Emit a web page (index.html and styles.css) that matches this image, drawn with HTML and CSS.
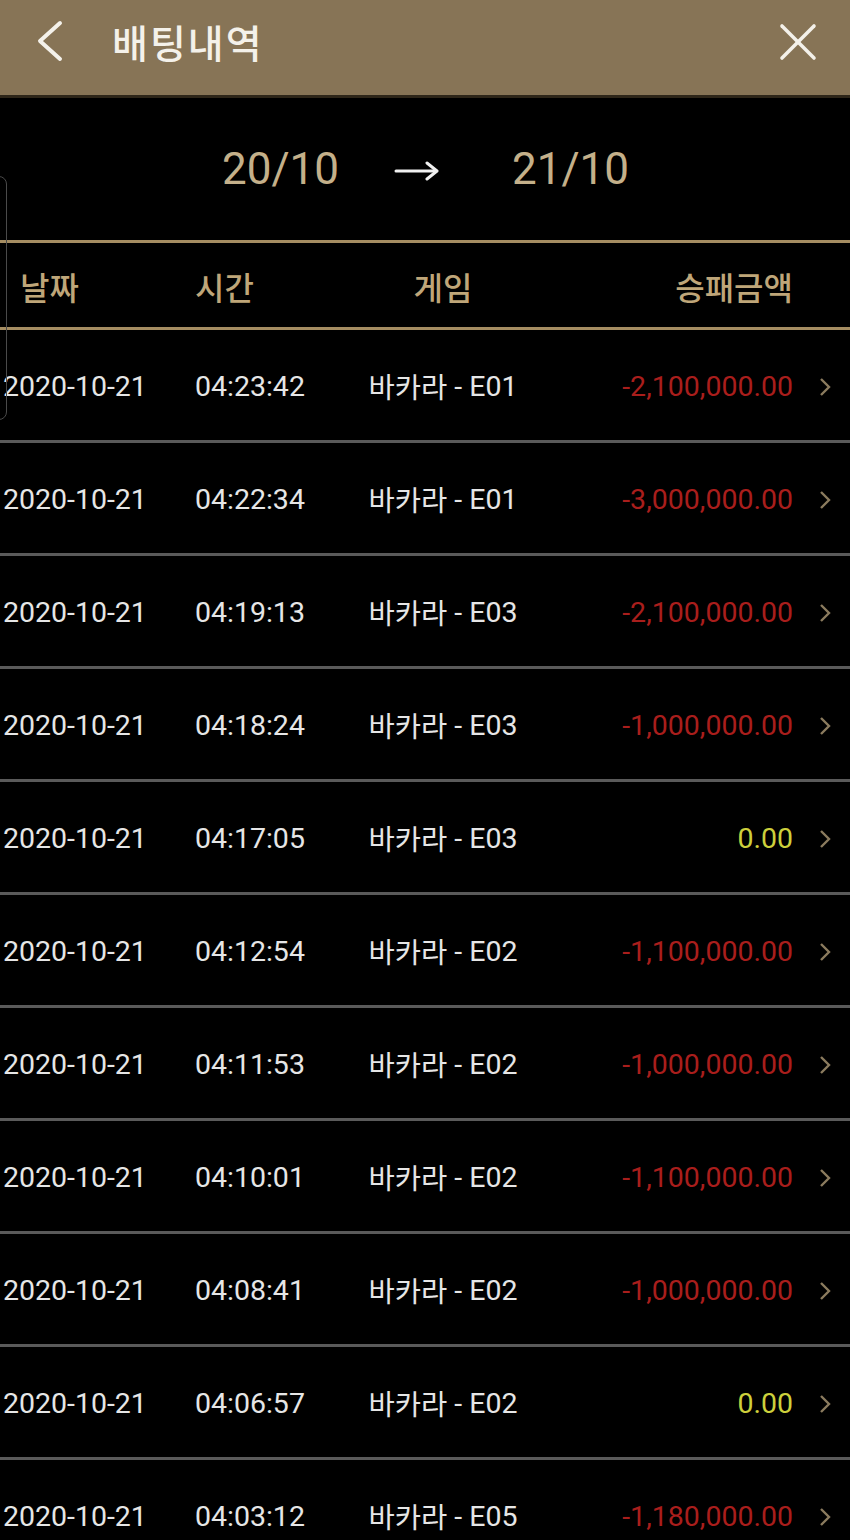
FILE: index.html
```html
<!DOCTYPE html>
<html lang="ko">
  <head>
    <meta charset="UTF-8" />
    <title>배팅내역</title>
    <link rel="stylesheet" href="styles.css">
  </head>

  <body>
    <header class="topbar">
      <button class="icon-btn back" aria-label="뒤로">
        <svg width="30" height="44" viewBox="0 0 30 44">
          <polyline points="24,3 4,21 24,39" fill="none" stroke="#f4f1ea" stroke-width="4" stroke-linecap="round" stroke-linejoin="round" />
        </svg>
      </button>
      <h1>배팅내역</h1>
      <button class="icon-btn close" aria-label="닫기">
        <svg width="40" height="40" viewBox="0 0 40 40">
          <line x1="4" y1="4" x2="36" y2="36" stroke="#f4f1ea" stroke-width="3.6" stroke-linecap="round" />
          <line x1="36" y1="4" x2="4" y2="36" stroke="#f4f1ea" stroke-width="3.6" stroke-linecap="round" />
        </svg>
      </button>
    </header>

    <section class="range">
      <span class="range-date">20/10</span>
      <svg class="range-arrow" width="46" height="20" viewBox="0 0 46 20">
        <line x1="2" y1="10" x2="42" y2="10" stroke="#f0f0f0" stroke-width="3" stroke-linecap="round" />
        <polyline points="33,2 43,10 33,18" fill="none" stroke="#f0f0f0" stroke-width="3" stroke-linecap="round" stroke-linejoin="round" />
      </svg>
      <span class="range-date">21/10</span>
    </section>

    <div class="side-tab"></div>

    <div class="table">
      <div class="row head">
        <span class="c-date">날짜</span>
        <span class="c-time">시간</span>
        <span class="c-game">게임</span>
        <span class="c-amount">승패금액</span>
        <span></span>
      </div>

      <div class="row">
        <span class="c-date">2020-10-21</span>
        <span class="c-time">04:23:42</span>
        <span class="c-game"><span class="kr">바카라</span> - E01</span>
        <span class="c-amount loss">-2,100,000.00</span>
        <span class="c-more"><svg width="12" height="20" viewBox="0 0 12 20"><polyline points="2,2 10,10 2,18" fill="none" stroke="#8b7b5e" stroke-width="2.4" /></svg></span>
      </div>
      <div class="row">
        <span class="c-date">2020-10-21</span>
        <span class="c-time">04:22:34</span>
        <span class="c-game"><span class="kr">바카라</span> - E01</span>
        <span class="c-amount loss">-3,000,000.00</span>
        <span class="c-more"><svg width="12" height="20" viewBox="0 0 12 20"><polyline points="2,2 10,10 2,18" fill="none" stroke="#8b7b5e" stroke-width="2.4" /></svg></span>
      </div>
      <div class="row">
        <span class="c-date">2020-10-21</span>
        <span class="c-time">04:19:13</span>
        <span class="c-game"><span class="kr">바카라</span> - E03</span>
        <span class="c-amount loss">-2,100,000.00</span>
        <span class="c-more"><svg width="12" height="20" viewBox="0 0 12 20"><polyline points="2,2 10,10 2,18" fill="none" stroke="#8b7b5e" stroke-width="2.4" /></svg></span>
      </div>
      <div class="row">
        <span class="c-date">2020-10-21</span>
        <span class="c-time">04:18:24</span>
        <span class="c-game"><span class="kr">바카라</span> - E03</span>
        <span class="c-amount loss">-1,000,000.00</span>
        <span class="c-more"><svg width="12" height="20" viewBox="0 0 12 20"><polyline points="2,2 10,10 2,18" fill="none" stroke="#8b7b5e" stroke-width="2.4" /></svg></span>
      </div>
      <div class="row">
        <span class="c-date">2020-10-21</span>
        <span class="c-time">04:17:05</span>
        <span class="c-game"><span class="kr">바카라</span> - E03</span>
        <span class="c-amount even">0.00</span>
        <span class="c-more"><svg width="12" height="20" viewBox="0 0 12 20"><polyline points="2,2 10,10 2,18" fill="none" stroke="#8b7b5e" stroke-width="2.4" /></svg></span>
      </div>
      <div class="row">
        <span class="c-date">2020-10-21</span>
        <span class="c-time">04:12:54</span>
        <span class="c-game"><span class="kr">바카라</span> - E02</span>
        <span class="c-amount loss">-1,100,000.00</span>
        <span class="c-more"><svg width="12" height="20" viewBox="0 0 12 20"><polyline points="2,2 10,10 2,18" fill="none" stroke="#8b7b5e" stroke-width="2.4" /></svg></span>
      </div>
      <div class="row">
        <span class="c-date">2020-10-21</span>
        <span class="c-time">04:11:53</span>
        <span class="c-game"><span class="kr">바카라</span> - E02</span>
        <span class="c-amount loss">-1,000,000.00</span>
        <span class="c-more"><svg width="12" height="20" viewBox="0 0 12 20"><polyline points="2,2 10,10 2,18" fill="none" stroke="#8b7b5e" stroke-width="2.4" /></svg></span>
      </div>
      <div class="row">
        <span class="c-date">2020-10-21</span>
        <span class="c-time">04:10:01</span>
        <span class="c-game"><span class="kr">바카라</span> - E02</span>
        <span class="c-amount loss">-1,100,000.00</span>
        <span class="c-more"><svg width="12" height="20" viewBox="0 0 12 20"><polyline points="2,2 10,10 2,18" fill="none" stroke="#8b7b5e" stroke-width="2.4" /></svg></span>
      </div>
      <div class="row">
        <span class="c-date">2020-10-21</span>
        <span class="c-time">04:08:41</span>
        <span class="c-game"><span class="kr">바카라</span> - E02</span>
        <span class="c-amount loss">-1,000,000.00</span>
        <span class="c-more"><svg width="12" height="20" viewBox="0 0 12 20"><polyline points="2,2 10,10 2,18" fill="none" stroke="#8b7b5e" stroke-width="2.4" /></svg></span>
      </div>
      <div class="row">
        <span class="c-date">2020-10-21</span>
        <span class="c-time">04:06:57</span>
        <span class="c-game"><span class="kr">바카라</span> - E02</span>
        <span class="c-amount even">0.00</span>
        <span class="c-more"><svg width="12" height="20" viewBox="0 0 12 20"><polyline points="2,2 10,10 2,18" fill="none" stroke="#8b7b5e" stroke-width="2.4" /></svg></span>
      </div>
      <div class="row">
        <span class="c-date">2020-10-21</span>
        <span class="c-time">04:03:12</span>
        <span class="c-game"><span class="kr">바카라</span> - E05</span>
        <span class="c-amount loss">-1,180,000.00</span>
        <span class="c-more"><svg width="12" height="20" viewBox="0 0 12 20"><polyline points="2,2 10,10 2,18" fill="none" stroke="#8b7b5e" stroke-width="2.4" /></svg></span>
      </div>
    </div>
  </body>
</html>
```

FILE: styles.css
```css
body {
  margin: 0;
  background-color: #000;
  color: #e6e6e6;
  font-family: Roboto, "Noto Sans CJK KR", sans-serif;
  height: 1540px;
  overflow: hidden;
  position: relative;
}

.topbar {
  height: 98px;
  display: flex;
  align-items: center;
  padding: 0 32px 12px 36px;
  box-sizing: border-box;
  background-color: #877456;
  border-bottom: 3px solid #2e2619;
}

.topbar h1 {
  flex: 1;
  margin: 0 0 0 46px;
  font-family: "Noto Sans CJK KR", sans-serif;
  font-size: 39px;
  font-weight: 500;
  line-height: 1;
  color: #f4f1ea;
  letter-spacing: 2px;
}

.icon-btn {
  background: none;
  border: none;
  padding: 0;
  display: flex;
}

.range {
  height: 142px;
  display: flex;
  justify-content: center;
  align-items: center;
  padding-left: 1px;
  box-sizing: border-box;
}

.range-date {
  font-size: 44px;
  color: #c4b08a;
}

.range-arrow {
  margin: 4px 72px 0 55px;
}

.side-tab {
  position: absolute;
  left: -12px;
  top: 176px;
  width: 17px;
  height: 242px;
  border: 1px solid #4a4a4a;
  border-radius: 8px;
}

.table {
  border-top: 3px solid #a58d62;
}

.row {
  display: grid;
  grid-template-columns: 190px 150px 206px 1fr 50px;
  align-items: center;
  height: 113px;
  padding-top: 4px;
  box-sizing: border-box;
  border-bottom: 3px solid #5a5a5a;
  font-size: 28.5px;
  line-height: 1;
}

.row.head {
  height: 87px;
  padding-top: 1px;
  border-bottom: 3px solid #a58d62;
  font-family: "Noto Sans CJK KR", sans-serif;
  font-size: 32px;
  font-weight: 500;
  color: #bfa679;
}

.c-date {
  padding-left: 3px;
}

.head .c-date {
  padding-left: 20px;
}

.c-time {
  padding-left: 5px;
}

.c-game {
  text-align: center;
}

.kr {
  position: relative;
  top: 2px;
}

.c-amount {
  text-align: right;
  padding-right: 7px;
}

.c-more {
  display: flex;
  padding-left: 19px;
}

.loss {
  color: #a91e1c;
}

.even {
  color: #cdd03c;
}
```
